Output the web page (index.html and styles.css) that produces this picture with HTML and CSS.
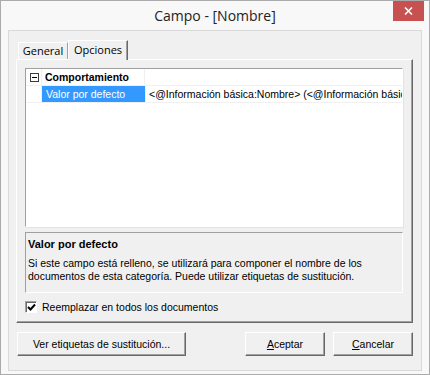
FILE: index.html
```html
<!DOCTYPE html>
<html lang="es">

<head>
    <meta charset="UTF-8">
    <meta name="viewport" content="width=device-width, initial-scale=1.0">
    <title>Campo - [Nombre]</title>
    <link rel="stylesheet" href="styles.css">
</head>

<body>

    <div class="window">
        <div class="titlebar">
            <span class="title">Campo - [Nombre]</span>
            <button class="close" type="button" aria-label="Cerrar">
                <svg width="9" height="8" viewBox="0 0 9 8">
                    <path d="M1 0.5 L8 7.5 M8 0.5 L1 7.5" stroke="#fff" stroke-width="1.6" fill="none" />
                </svg>
            </button>
        </div>

        <div class="client">
            <div class="tabs">
                <div class="tab general">General</div>
                <div class="tab active">Opciones</div>
            </div>

            <div class="tabpage">
                <div class="propgrid">
                    <div class="row category">
                        <div class="margin"><span class="toggle"></span></div>
                        <div class="name">Comportamiento</div>
                        <div class="value"></div>
                    </div>
                    <div class="row">
                        <div class="margin"></div>
                        <div class="name selected">Valor por defecto</div>
                        <div class="value">&lt;@Información básica:Nombre&gt; (&lt;@Información básic</div>
                    </div>
                </div>

                <div class="help">
                    <div class="help-title">Valor por defecto</div>
                    <p>Si este campo está relleno, se utilizará para componer el nombre de los<br>documentos de esta categoría. Puede utilizar etiquetas de sustitución.</p>
                </div>

                <label class="check">
                    <span class="box">
                        <svg width="9" height="9" viewBox="0 0 9 9">
                            <path d="M1 4 L3.5 6.5 L8 1.5" stroke="#000" stroke-width="2" fill="none" />
                        </svg>
                    </span>
                    Reemplazar en todos los documentos
                </label>
            </div>

            <div class="buttons">
                <button class="btn wide" type="button">Ver etiquetas de sustitución...</button>
                <div class="spacer"></div>
                <button class="btn" type="button"><u>A</u>ceptar</button>
                <button class="btn" type="button"><u>C</u>ancelar</button>
            </div>
        </div>
    </div>

</body>

</html>
```

FILE: styles.css
```css
body {
    margin: 0;
    font-family: "Liberation Sans", Arial, sans-serif;
    font-size: 10.5px;
    color: #000;
    background: #fff;
}

.window {
    width: 430px;
    height: 375px;
    box-sizing: border-box;
    border: 1px solid #ababab;
    background: #f8f8f8;
    display: flex;
    flex-direction: column;
    position: relative;
}

.titlebar {
    height: 29px;
    display: flex;
    align-items: center;
    justify-content: center;
}

.title {
    font-family: "Open Sans", "Noto Sans", sans-serif;
    font-size: 14px;
    color: #222;
    margin-top: -1px;
}

.close {
    position: absolute;
    top: 0;
    right: 5px;
    width: 31px;
    height: 20px;
    padding: 0;
    border: 0;
    background: #c75050;
    display: flex;
    align-items: center;
    justify-content: center;
}

.client {
    flex: 1;
    margin: 0 7px 3px 7px;
    border: 1px solid #d9d9d9;
    background: #f0f0f0;
    padding: 9px 8px 0 7px;
    display: flex;
    flex-direction: column;
}

/* tabs */
.tabs {
    display: flex;
    align-items: flex-end;
    height: 19px;
    padding-left: 2px;
    position: relative;
    z-index: 1;
}

.tab {
    font-family: "Open Sans", "Noto Sans", sans-serif;
    font-size: 11px;
    width: 50px;
    height: 17px;
    line-height: 16px;
    text-align: center;
    border: 1px solid #fff;
    border-right: 1px solid #a0a0a0;
    border-bottom: 0;
    box-sizing: border-box;
    color: #000;
    white-space: nowrap;
}

.tab.active {
    width: 60px;
    height: 20px;
    margin-bottom: -1px;
    line-height: 18px;
    background: #f0f0f0;
    border-right: 1px solid #696969;
    box-shadow: inset -1px 0 0 #a0a0a0;
}

.tabpage {
    height: 264px;
    box-sizing: border-box;
    border: 1px solid;
    border-color: #fff #696969 #696969 #fff;
    box-shadow: inset -1px -1px 0 #a0a0a0;
    padding: 8px 9px 0 8px;
}

/* property grid */
.propgrid {
    height: 159px;
    box-sizing: border-box;
    background: #fff;
    border: 1px solid;
    border-color: #a0a0a0 #fff #fff #a0a0a0;
    box-shadow: 1px 1px 0 #e3e3e3;
    overflow: hidden;
}

.row {
    display: flex;
    height: 17px;
    border-bottom: 1px solid #f0f0f0;
    box-sizing: border-box;
}

.margin {
    width: 16px;
    flex: none;
    border-right: 1px solid #f0f0f0;
    display: flex;
    align-items: center;
    padding-left: 4px;
    box-sizing: border-box;
}

.toggle {
    width: 9px;
    height: 9px;
    box-sizing: border-box;
    border: 1px solid #3c3c3c;
    position: relative;
}

.toggle::after {
    content: "";
    position: absolute;
    left: 1px;
    right: 1px;
    top: 3px;
    height: 1px;
    background: #000;
}

.name {
    width: 99px;
    flex: none;
    padding-left: 4px;
    line-height: 16px;
    border-right: 1px solid #f0f0f0;
    white-space: nowrap;
}

.category .name {
    font-weight: bold;
    padding-left: 3px;
}

.name.selected {
    background: #3399ff;
    color: #fff;
}

.value {
    flex: 1;
    min-width: 0;
    padding-left: 3px;
    line-height: 16px;
    white-space: nowrap;
    overflow: hidden;
}

/* help box */
.help {
    margin-top: 5px;
    height: 61px;
    box-sizing: border-box;
    border: 1px solid;
    border-color: #a0a0a0 #fff #fff #a0a0a0;
    padding: 4px 2px 0 2px;
}

.help-title {
    font-weight: bold;
    font-size: 11px;
    line-height: 14px;
}

.help p {
    margin: 6px 0 0;
    line-height: 13px;
}

/* checkbox */
.check {
    display: flex;
    align-items: center;
    gap: 5px;
    margin-top: 7px;
    height: 14px;
}

.box {
    width: 12px;
    height: 12px;
    box-sizing: border-box;
    background: #fff;
    border: 1px solid;
    border-color: #a0a0a0 #fff #fff #a0a0a0;
    box-shadow: inset 1px 1px 0 #696969;
    display: flex;
    align-items: center;
    justify-content: center;
    padding: 1px 0 0 1px;
}

/* buttons */
.buttons {
    display: flex;
    gap: 8px;
    margin-top: 9px;
    padding-left: 1px;
}

.spacer {
    flex: 1;
}

.btn {
    font-family: "Liberation Sans", Arial, sans-serif;
    font-size: 10.5px;
    color: #000;
    width: 80px;
    height: 24px;
    padding: 0;
    background: #f0f0f0;
    border: 1px solid;
    border-color: #fff #696969 #696969 #fff;
    box-shadow: inset -1px -1px 0 #a0a0a0;
}

.btn.wide {
    width: 169px;
}
```
